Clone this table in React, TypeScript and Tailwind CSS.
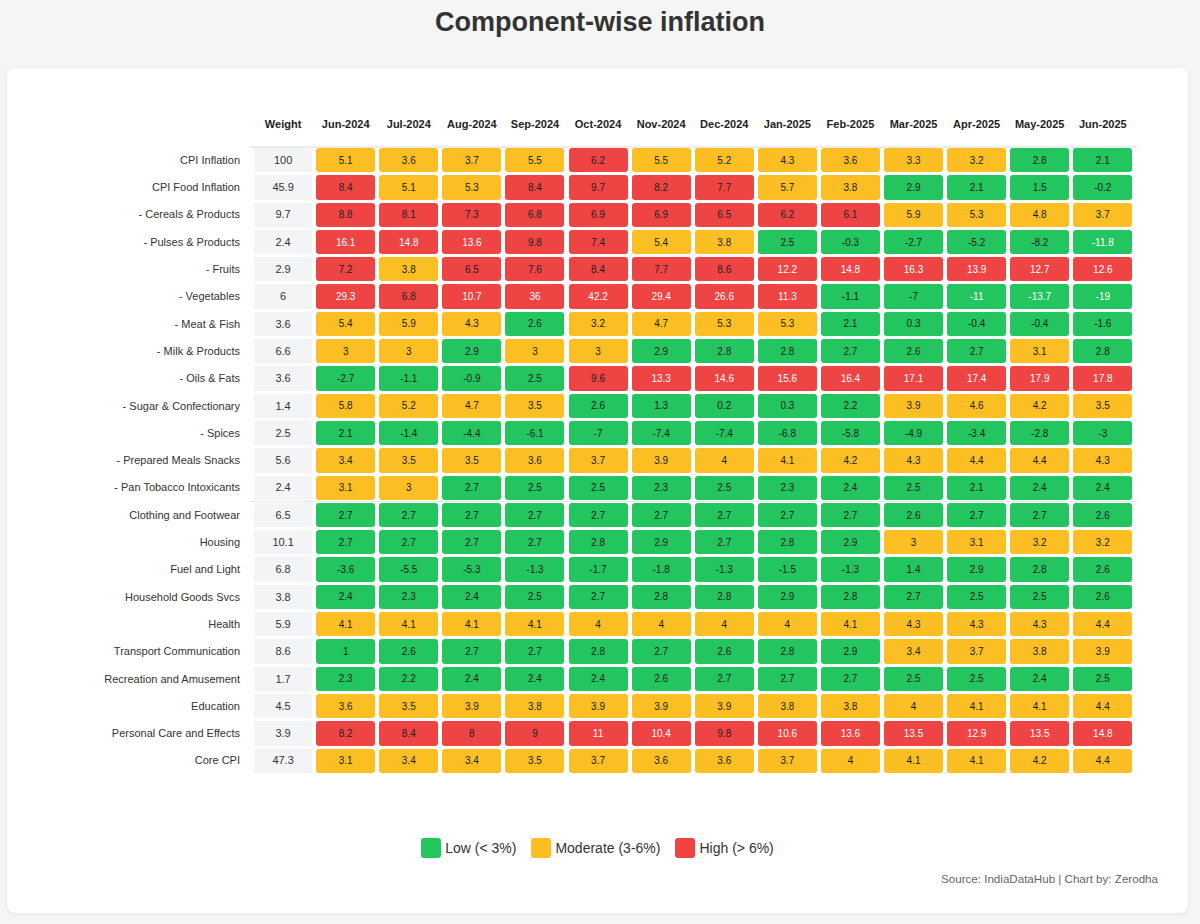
const months = [
  'Jun-2024', 'Jul-2024', 'Aug-2024', 'Sep-2024', 'Oct-2024', 'Nov-2024', 'Dec-2024',
  'Jan-2025', 'Feb-2025', 'Mar-2025', 'Apr-2025', 'May-2025', 'Jun-2025',
];

type Row = { label: string; weight: string; values: number[]; divider?: boolean };

const rows: Row[] = [
  { label: 'CPI Inflation', weight: '100', values: [5.1, 3.6, 3.7, 5.5, 6.2, 5.5, 5.2, 4.3, 3.6, 3.3, 3.2, 2.8, 2.1] },
  { label: 'CPI Food Inflation', weight: '45.9', values: [8.4, 5.1, 5.3, 8.4, 9.7, 8.2, 7.7, 5.7, 3.8, 2.9, 2.1, 1.5, -0.2] },
  { label: '- Cereals & Products', weight: '9.7', values: [8.8, 8.1, 7.3, 6.8, 6.9, 6.9, 6.5, 6.2, 6.1, 5.9, 5.3, 4.8, 3.7] },
  { label: '- Pulses & Products', weight: '2.4', values: [16.1, 14.8, 13.6, 9.8, 7.4, 5.4, 3.8, 2.5, -0.3, -2.7, -5.2, -8.2, -11.8] },
  { label: '- Fruits', weight: '2.9', values: [7.2, 3.8, 6.5, 7.6, 8.4, 7.7, 8.6, 12.2, 14.8, 16.3, 13.9, 12.7, 12.6] },
  { label: '- Vegetables', weight: '6', values: [29.3, 6.8, 10.7, 36, 42.2, 29.4, 26.6, 11.3, -1.1, -7, -11, -13.7, -19] },
  { label: '- Meat & Fish', weight: '3.6', values: [5.4, 5.9, 4.3, 2.6, 3.2, 4.7, 5.3, 5.3, 2.1, 0.3, -0.4, -0.4, -1.6] },
  { label: '- Milk & Products', weight: '6.6', values: [3, 3, 2.9, 3, 3, 2.9, 2.8, 2.8, 2.7, 2.6, 2.7, 3.1, 2.8] },
  { label: '- Oils & Fats', weight: '3.6', values: [-2.7, -1.1, -0.9, 2.5, 9.6, 13.3, 14.6, 15.6, 16.4, 17.1, 17.4, 17.9, 17.8] },
  { label: '- Sugar & Confectionary', weight: '1.4', values: [5.8, 5.2, 4.7, 3.5, 2.6, 1.3, 0.2, 0.3, 2.2, 3.9, 4.6, 4.2, 3.5] },
  { label: '- Spices', weight: '2.5', values: [2.1, -1.4, -4.4, -6.1, -7, -7.4, -7.4, -6.8, -5.8, -4.9, -3.4, -2.8, -3] },
  { label: '- Prepared Meals Snacks', weight: '5.6', values: [3.4, 3.5, 3.5, 3.6, 3.7, 3.9, 4, 4.1, 4.2, 4.3, 4.4, 4.4, 4.3] },
  { label: '- Pan Tobacco Intoxicants', weight: '2.4', values: [3.1, 3, 2.7, 2.5, 2.5, 2.3, 2.5, 2.3, 2.4, 2.5, 2.1, 2.4, 2.4], divider: true },
  { label: 'Clothing and Footwear', weight: '6.5', values: [2.7, 2.7, 2.7, 2.7, 2.7, 2.7, 2.7, 2.7, 2.7, 2.6, 2.7, 2.7, 2.6] },
  { label: 'Housing', weight: '10.1', values: [2.7, 2.7, 2.7, 2.7, 2.8, 2.9, 2.7, 2.8, 2.9, 3, 3.1, 3.2, 3.2] },
  { label: 'Fuel and Light', weight: '6.8', values: [-3.6, -5.5, -5.3, -1.3, -1.7, -1.8, -1.3, -1.5, -1.3, 1.4, 2.9, 2.8, 2.6] },
  { label: 'Household Goods Svcs', weight: '3.8', values: [2.4, 2.3, 2.4, 2.5, 2.7, 2.8, 2.8, 2.9, 2.8, 2.7, 2.5, 2.5, 2.6] },
  { label: 'Health', weight: '5.9', values: [4.1, 4.1, 4.1, 4.1, 4, 4, 4, 4, 4.1, 4.3, 4.3, 4.3, 4.4] },
  { label: 'Transport Communication', weight: '8.6', values: [1, 2.6, 2.7, 2.7, 2.8, 2.7, 2.6, 2.8, 2.9, 3.4, 3.7, 3.8, 3.9] },
  { label: 'Recreation and Amusement', weight: '1.7', values: [2.3, 2.2, 2.4, 2.4, 2.4, 2.6, 2.7, 2.7, 2.7, 2.5, 2.5, 2.4, 2.5] },
  { label: 'Education', weight: '4.5', values: [3.6, 3.5, 3.9, 3.8, 3.9, 3.9, 3.9, 3.8, 3.8, 4, 4.1, 4.1, 4.4] },
  { label: 'Personal Care and Effects', weight: '3.9', values: [8.2, 8.4, 8, 9, 11, 10.4, 9.8, 10.6, 13.6, 13.5, 12.9, 13.5, 14.8] },
  { label: 'Core CPI', weight: '47.3', values: [3.1, 3.4, 3.4, 3.5, 3.7, 3.6, 3.6, 3.7, 4, 4.1, 4.1, 4.2, 4.4] },
];

function cellClass(v: number) {
  const bg = v < 3 ? 'bg-[#22c55e]' : v <= 6 ? 'bg-[#fbbf24]' : 'bg-[#ef4444]';
  const fg = Math.abs(v) >= 10 ? 'text-white' : 'text-[#222]';
  return `${bg} ${fg}`;
}

const gridCols = 'grid grid-cols-[190px_58px_repeat(13,59px)] gap-x-[4.1px]';

export default function App() {
  return (
    <div className="min-h-[924px] w-[1200px] bg-[#f5f5f5] font-['Liberation_Sans',Arial,sans-serif] text-[#333]">
      <h1 className="pt-[6px] pb-[30px] text-center text-[27px] font-bold leading-[32px] text-[#333]">
        Component-wise inflation
      </h1>

      <div className="ml-[7px] w-[1181px] rounded-[8px] bg-white pt-[34px] pb-[27px] shadow-[0_1px_4px_rgba(0,0,0,0.08)]">
        <div className="ml-[53px] w-[1073px]">
          <div className={`${gridCols} h-[44px] items-center text-[11px] font-bold text-[#222]`}>
            <div />
            <div className="text-center">Weight</div>
            {months.map((m) => (
              <div key={m} className="text-center">{m}</div>
            ))}
          </div>
          <div className="ml-[190px] -mr-[4px] h-[2px] bg-[#ececec]" />

          <div className="flex flex-col gap-[3px]">
            {rows.map((row) => (
              <div key={row.label} className="contents">
                <div className={`${gridCols} h-[24.3px] items-stretch`}>
                  <div className="flex items-center justify-end pr-[10px] text-[11px] text-[#333] whitespace-nowrap">
                    {row.label}
                  </div>
                  <div className="flex items-center justify-center bg-[#f3f4f6] text-[11px] text-[#333]">
                    {row.weight}
                  </div>
                  {row.values.map((v, i) => (
                    <div
                      key={i}
                      className={`flex items-center justify-center rounded-[3px] text-[10px] ${cellClass(v)}`}
                    >
                      {v}
                    </div>
                  ))}
                </div>
                {row.divider && <div className="-my-[2px] ml-[190px] -mr-[4px] h-px bg-[#e5e7eb]" />}
              </div>
            ))}
          </div>
        </div>

        <div className="mt-[65px] flex items-center justify-center gap-[15px] text-[14px] text-[#333]">
          <div className="flex items-center gap-[4px]">
            <span className="h-[20px] w-[20px] rounded-[3px] bg-[#22c55e]" />
            <span>Low (&lt; 3%)</span>
          </div>
          <div className="flex items-center gap-[4px]">
            <span className="h-[20px] w-[20px] rounded-[3px] bg-[#fbbf24]" />
            <span>Moderate (3-6%)</span>
          </div>
          <div className="flex items-center gap-[4px]">
            <span className="h-[20px] w-[20px] rounded-[3px] bg-[#ef4444]" />
            <span>High (&gt; 6%)</span>
          </div>
        </div>

        <div className="mt-[13px] pr-[30px] text-right text-[11.6px] leading-[14px] text-[#666]">
          Source: IndiaDataHub | Chart by: Zerodha
        </div>
      </div>
    </div>
  );
}
